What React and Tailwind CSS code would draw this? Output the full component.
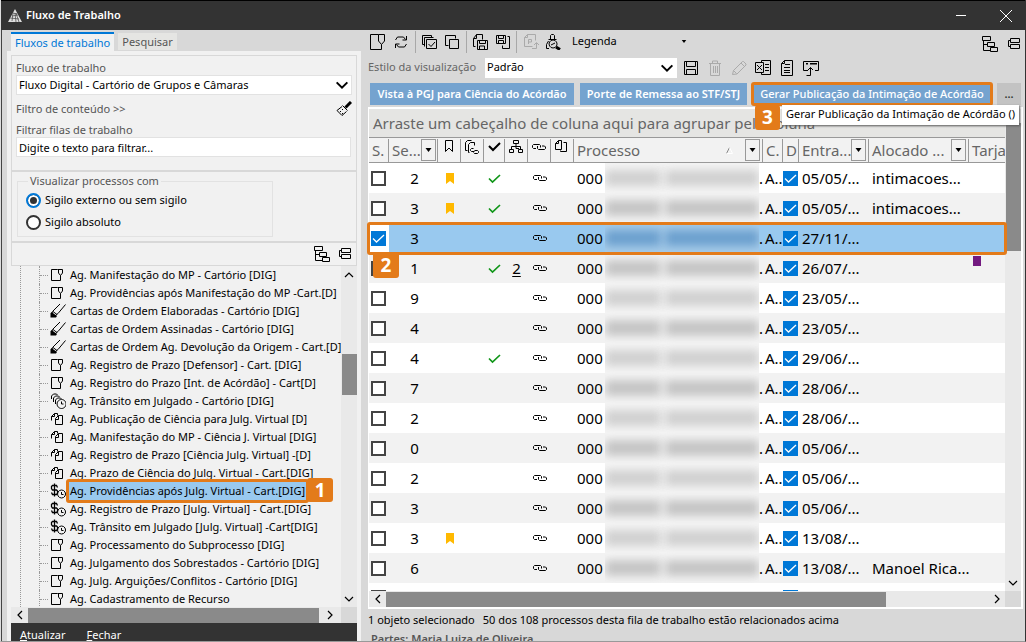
import React from "react";

const glyphs = {
  file: { paths: ["M7.500 2.500h-6v11h9v-5", "M7.500 2.500h5v3.500l-2 2.500-2-2.500v-3.500"] },
  fileLarge: { paths: ["M8.500 .5h-8v15h11v-5", "M8.500 .5h6v6.500l-3 3.500-3-3.500v-6.500"] },
  pen: { paths: ["M10 1L3 8l-1.500 3", "M15.500 1.500L8 10.500l-3 2.500", "M3 8.500l4 3"], fill: "M1.500 9l5.500 4-1 1.500H.5v-4z" },
  clocks: { paths: ["M1.500 6V3l2-2h3l1 1", "M3.500 9V5l2-2h3l1 1", "M5.500 11V7l2-2h3l1 1", "M11.500 6.500a4.500 4.500 0 1 0 .1 0z", "M11.500 8.500v2.500h2"] },
  copies: { paths: ["M1.500 9.500v-4l3-3h3v2M1.500 5.500h3v-3", "M5.500 13.500v-6l3-3h4v9zM5.500 8.500h3v-4"] },
  money: { paths: ["M7.500 4.500l-1-2h-4l-1 1v2l1 1.500h4l1 1v2l-1 1.500h-4l-1-2", "M4.500 .5v13"], thinBold: true, extra: ["M11.500 7a4 4 0 1 0 .1 0z", "M11.500 9v2.500h2"] },
  refresh: { paths: ["M2.500 6l2-3h6l2 2.500M13.500 2v4h-4", "M13.500 10l-2 3h-6l-2-2.500M2.500 14v-4h4"] },
  selectAll: { paths: ["M3.500 10.500h-2v-9h9v2", "M5.500 5.500h10v9h-10z", "M3.500 12.500v-9h9", "M7.500 10l2.500 2.500 4-4.500"] },
  stack: { paths: ["M4.500 11.500h-3v-10h10v3", "M5.500 5.500h9v9h-9z"] },
  copySave: { paths: ["M3.500 12.500h-2v-8l3-4h6v5M1.500 4.500h3v-4", "M5.500 6.500h10v9h-10zM7.500 6.500v3h6v-3M7.500 15v-3h5v3"] },
  saveCopy: { paths: ["M1.500 1.500h9v8h-9zM3.500 1.500v3h5v-3M3.500 9V6.500h5V9", "M12.500 2.500h2v12h-7v-3"] },
  pageUp: { paths: ["M9.500 12.500h-8v-9l3-3h8v6M4.500 .5v3h-3", "M5.500 10V5.500h3v2.500h-3", "M9 14.500h4.500V9M11 11l2.500-2.500L16 11"] },
  search: { paths: ["M5.500 5V1.500l1-1h2l1 1V5", "M3.500 5.500h8", "M4 14.500H1.500v-4l2-3.500", "M8 6a4 4 0 1 0 .1 0z", "M6 11l4-2"], thick: "M11 13l4 2.500" },
  tree: { paths: ["M.5 .5h8v4h-8z", "M5.500 6.500h7v4h-7z", "M8.500 11.500h7v4h-7z", "M1.500 5v9.500h7M1.500 8.500h4"] },
  collapse: { paths: ["M3.500 2.500h9v4h-9zM3.500 8.500h9v4h-9z", "M3.500 4.500h-2v6h2"] },
  save: { paths: ["M1.500 1.500h13v13h-13z", "M3.500 1.500v5h9v-5M3.500 14.500v-5h9v5"] },
  trash: { paths: ["M2 3.500h12M5.500 3v-2h5v2M3.500 4v11.500h9V4M6.500 6v7M8.500 6v7M10.500 6v7"] },
  pencil: { paths: ["M1.500 14.500l1-4 9-9h1l2.500 2.500v1l-9 9zM2.500 10.500l3 3M10 3l3 3"] },
  excel: { paths: ["M6.500 2V.5h9v14h-9V13", "M.5 2.500h8v10h-8zM2 5l5 5M7 5l-5 5", "M10 4.500h4M10 7.500h4M10 10.500h4"] },
  doc: { paths: ["M5.500 .5h8v15h-11v-12z", "M5.500 .5v3h-3M6 4.500h5M5 7.500h6M5 10.500h6M5 12.500h6"] },
  panel: { paths: ["M5 10.500H.5v-9h15v9H12", "M3.500 15.500h4v-8M5 10l2.500-2.500L10 10"], fill: "M3 3h2v1.500H3zM7 3h7v1.500H7z" },
  broom: { paths: ["M6.500 4.500l5 5", "M6 5.500l-5 4 5 5 4.500-4M4 10l1 1M6 8l1 1M6 12l1 1"], thick: "M15 1L9.500 6.500" },
  bookmark: { paths: ["M4.500 1.500h7v11l-3.500-3.500-3.500 3.500z"] },
  copyLink: { paths: ["M3.500 11.500h-2v-8l2-2h4M5.500 13.500h-1v-8l2-2h4v3", "M9.500 9.500h-2l-1 1v1l1 1h3M10.500 11.500h3l1 1v1l-1 1h-3l-1-1"] },
  org: { paths: ["M5.500 1.500h5v3h-5zM8 5v2.500M3.500 10V7.500h9V10M8 7.500v2h3", "M1.500 10.500h4v3h-4zM10.500 10.500h4v3h-4z"] },
  link: { paths: ["M5 9.500H2.500l-1-1v-2l1-1h6l1 1v2", "M6.500 7v2.500l1 1h6l1-1v-1.500l-1-1H11"] },
  pagePair: { paths: ["M7.500 10.500h-6v-6l3-3h3zM1.500 4.500h3v-3", "M9.500 3.500h3v9h-6v-1"] },
};

function Glyph({ name, className = "size-4" }) {
  const g = glyphs[name];
  return (
    <svg viewBox="0 0 16 16" className={`shrink-0 ${className}`} fill="none" stroke="currentColor" aria-hidden="true">
      {g.paths.map((d) => <path key={d} d={d} strokeWidth={g.thinBold ? 1.3 : 1} />)}
      {g.extra && g.extra.map((d) => <path key={d} d={d} />)}
      {g.fill && <path d={g.fill} fill="currentColor" stroke="none" />}
      {g.thick && <path d={g.thick} strokeWidth="3" />}
    </svg>
  );
}

function Chevron({ className = "size-3", dir = "down", width = 1.5 }) {
  const d = { down: "M2 4l4 4 4-4", up: "M2 8l4-4 4 4", left: "M8 2L4 6l4 4", right: "M4 2l4 4-4 4" }[dir];
  return (
    <svg viewBox="0 0 12 12" className={className} fill="none" stroke="currentColor" strokeWidth={width} aria-hidden="true">
      <path d={d} />
    </svg>
  );
}

function Check({ className, weight = 1.3 }) {
  return (
    <svg viewBox="0 0 15 15" className={className} fill="none" stroke="currentColor" aria-hidden="true">
      <path d="M2 7.500l3.500 3.500L13 4" strokeWidth={weight} />
    </svg>
  );
}

function Tick({ label, checked }) {
  return (
    <label className="grid size-[15px] place-items-center">
      <input type="checkbox" aria-label={label} defaultChecked={checked}
        className="peer col-start-1 row-start-1 size-[15px] appearance-none border-2 border-[#444] bg-white checked:border-[#0078d7] checked:bg-[#0078d7]" />
      <Check className="pointer-events-none col-start-1 row-start-1 hidden size-[15px] text-white peer-checked:block" />
    </label>
  );
}

function IconButton({ name, label, className = "" }) {
  return (
    <button type="button" aria-label={label} className={`flex size-4 items-center justify-center ${className}`}>
      <Glyph name={name} />
    </button>
  );
}

function Badge({ children, className }) {
  return (
    <span className={`absolute flex items-center justify-center rounded-[3px] bg-[#e37b1a] font-bold text-white ${className}`}>
      {children}
    </span>
  );
}

const queues = [
  ["file", "Ag. Manifestação do MP - Cartório [DIG]"],
  ["file", "Ag. Providências após Manifestação do MP -Cart.[D]"],
  ["pen", "Cartas de Ordem Elaboradas - Cartório [DIG]"],
  ["pen", "Cartas de Ordem Assinadas - Cartório [DIG]"],
  ["pen", "Cartas de Ordem Ag. Devolução da Origem - Cart.[D]"],
  ["file", "Ag. Registro de Prazo [Defensor] - Cart. [DIG]"],
  ["file", "Ag. Registro do Prazo [Int. de Acórdão] - Cart[D]"],
  ["clocks", "Ag. Trânsito em Julgado - Cartório [DIG]"],
  ["copies", "Ag. Publicação de Ciência para Julg. Virtual [D]"],
  ["copies", "Ag. Manifestação do MP - Ciência J. Virtual [DIG]"],
  ["copies", "Ag. Registro de Prazo [Ciência Julg. Virtual] -[D]"],
  ["copies", "Ag. Prazo de Ciência do Julg. Virtual - Cart.[DIG]"],
  ["money", "Ag. Providências após Julg. Virtual - Cart.[DIG]"],
  ["money", "Ag. Registro de Prazo [Julg. Virtual] - Cart.[DIG]"],
  ["money", "Ag. Trânsito em Julgado [Julg. Virtual] -Cart[DIG]"],
  ["file", "Ag. Processamento do Subprocesso [DIG]"],
  ["file", "Ag. Julgamento dos Sobrestados - Cartório [DIG]"],
  ["file", "Ag. Julg. Arguições/Conflitos - Cartório [DIG]"],
  ["file", "Ag. Cadastramento de Recurso"],
];
const activeQueue = 12;

const rows = [
  { n: 2, mark: true, ok: true, date: "05/05/...", who: "intimacoes..." },
  { n: 3, mark: true, ok: true, date: "05/05/...", who: "intimacoes..." },
  { n: 3, sel: true, date: "27/11/..." },
  { n: 1, ok: true, sub: 2, date: "26/07/...", tag: true },
  { n: 9, date: "23/05/..." },
  { n: 4, date: "23/05/..." },
  { n: 4, ok: true, date: "29/06/..." },
  { n: 7, date: "28/06/..." },
  { n: 2, date: "28/06/..." },
  { n: 0, date: "05/06/..." },
  { n: 2, date: "05/06/..." },
  { n: 3, date: "05/06/..." },
  { n: 3, mark: true, date: "13/08/..." },
  { n: 6, date: "13/08/...", who: "Manoel Rica..." },
];

function LeftPanel() {
  return (
    <aside className="flex w-[354px] shrink-0 flex-col">
      <div role="tablist" className="flex h-[21px] shrink-0 items-end gap-1 pl-1 pt-0.5 text-[11px]">
        <button role="tab" aria-selected="true" type="button" className="h-full border-t-2 border-[#0078d7] bg-[#f1f1f1] px-1 leading-4 text-[#0078d7]">
          Fluxos de trabalho
        </button>
        <button role="tab" aria-selected="false" type="button" className="mb-px h-[17px] bg-[#e5e5e3] px-1 leading-4 text-[#555]">Pesquisar</button>
      </div>
      <div className="flex min-h-0 flex-1 flex-col bg-[#f1f1f1] pl-1 pr-1 pt-1">
        <section className="h-[117px] shrink-0 border border-b-2 border-[#d8d8d8] px-1 pt-[5px] text-[11px] leading-[14px] text-[#555]">
          <label htmlFor="flow" className="block">Fluxo de trabalho</label>
          <div className="grid">
            <select id="flow" className="col-start-1 row-start-1 h-5 w-full appearance-none border border-[#e2e2e2] bg-white px-0.5 text-black">
              <option>Fluxo Digital - Cartório de Grupos e Câmaras</option>
            </select>
            <Chevron className="pointer-events-none col-start-1 row-start-1 mr-0.5 size-4 self-center justify-self-end text-black" />
          </div>
          <div className="flex items-center justify-between pt-1.5">
            <button type="button">Filtro de conteúdo &gt;&gt;</button>
            <IconButton name="broom" label="Limpar filtro" className="text-black" />
          </div>
          <label htmlFor="filter" className="block pt-1.5">Filtrar filas de trabalho</label>
          <input id="filter" placeholder="Digite o texto para filtrar..." className="block h-5 w-[335px] border border-[#e2e2e2] bg-white px-0.5 text-black placeholder:text-black placeholder:opacity-100" />
        </section>
        <section className="h-[71px] shrink-0 border-x border-b-2 border-[#d8d8d8] pl-[5px] pt-px text-[11px] leading-4">
          <fieldset className="h-[64px] w-[256px] border border-[#e2e2e2] px-2">
            <legend className="ml-0.5 px-0.5 text-[#555]">Visualizar processos com</legend>
            {["Sigilo externo ou sem sigilo", "Sigilo absoluto"].map((t, i) => (
              <label key={t} className="flex h-[22px] items-center gap-1">
                <input type="radio" name="secrecy" defaultChecked={i === 0}
                  className="size-[15px] appearance-none rounded-full border-2 border-[#333] bg-white checked:border-[#0078d7] checked:bg-[#333] checked:shadow-[inset_0_0_0_2px_white]" />
                {t}
              </label>
            ))}
          </fieldset>
        </section>
        <div className="flex h-[23px] shrink-0 items-center justify-end gap-2 border-x border-b border-[#d8d8d8] pr-0.5">
          <IconButton name="tree" label="Expandir filas" />
          <IconButton name="collapse" label="Recolher filas" />
        </div>
        <div className="flex min-h-0 flex-1">
          <ul className="ml-[9px] min-w-0 flex-1 overflow-hidden border-l border-dotted border-[#999] text-[11px] leading-[18px]">
            {queues.map(([icon, text], i) => (
              <li key={text} className="ml-[18px] flex h-[18px] items-center border-l border-dotted border-[#999]">
                <span className="w-2 shrink-0 border-t border-dotted border-[#999]" />
                <Glyph name={icon} className="ml-0.5 size-4" />
                <span className="relative ml-0.5 shrink-0">
                  <button type="button" className={i === activeQueue ? "h-[18px] whitespace-nowrap bg-[#99c9ef] px-0.5 leading-[18px]" : "whitespace-nowrap pl-0.5 leading-[18px]"}>
                    {text}
                  </button>
                  {i === activeQueue && (
                    <>
                      <span className="absolute -inset-x-0.5 -inset-y-[3px] rounded-[3px] border-[3px] border-[#e37b1a]" />
                      <Badge className="-top-1 left-full h-6 w-[26px] text-[19px]">1</Badge>
                    </>
                  )}
                </span>
              </li>
            ))}
          </ul>
          <div className="flex w-4 shrink-0 flex-col items-center bg-[#e9e9e9]">
            <Chevron dir="up" className="my-[3px] size-3" width={1.2} />
            <div className="mt-[70px] h-[41px] w-[15px] bg-[#8a8a8a]" />
            <Chevron className="mb-0.5 mt-auto size-3" width={1.2} />
          </div>
        </div>
        <div className="flex h-4 shrink-0 items-center bg-[#e9e9e9]">
          <span className="flex w-[17px] justify-center"><Chevron dir="left" className="size-3" width={1.2} /></span>
          <div className="h-[15px] flex-1 bg-[#8a8a8a]" />
          <span className="flex w-[22px] justify-center"><Chevron dir="right" className="size-3" width={1.2} /></span>
          <span className="h-full w-4 bg-[#d8d8d8]" />
        </div>
        <div className="flex h-[18px] shrink-0 gap-[21px] overflow-hidden bg-[#333] px-[9px] pt-1 text-[11px] leading-4 text-white">
          <button type="button" className="h-4"><u>A</u>tualizar</button>
          <button type="button" className="h-4"><u>F</u>echar</button>
        </div>
      </div>
    </aside>
  );
}

const Divider = () => <span className="h-[22px] w-px bg-[#a8a8a8]" />;

function Toolbars() {
  return (
    <>
      <div className="flex h-[23px] shrink-0 items-center justify-between">
        <div className="flex items-center text-black">
          <button type="button" aria-label="Novo" className="ml-0.5"><Glyph name="fileLarge" /></button>
          <IconButton name="refresh" label="Atualizar lista" className="ml-[7px] mr-1.5" />
          <Divider />
          <IconButton name="selectAll" label="Selecionar todos" className="ml-[5px] mr-[7px]" />
          <IconButton name="stack" label="Desmarcar todos" className="mr-1.5" />
          <Divider />
          <IconButton name="copySave" label="Salvar cópia" className="ml-[5px] mr-[7px]" />
          <IconButton name="saveCopy" label="Copiar e salvar" className="mr-[5px]" />
          <Divider />
          <IconButton name="pageUp" label="Publicar" className="mx-1.5 text-[#aaa]" />
          <IconButton name="search" label="Consultar processo" className="mr-[11px]" />
          <button type="button" className="flex w-[115px] items-center justify-between text-[11px]">
            Legenda
            <svg viewBox="0 0 6 4" className="h-[3px] w-1.5" aria-hidden="true"><path d="M0 0h6L3 4z" /></svg>
          </button>
        </div>
        <div className="flex items-center gap-[9px] pt-1">
          <IconButton name="tree" label="Expandir" />
          <IconButton name="collapse" label="Recolher" />
        </div>
      </div>
      <div className="flex h-7 shrink-0 items-center pt-px text-[#444]">
        <label htmlFor="style" className="w-[117px] whitespace-nowrap text-[11px] text-[#666]">Estilo da visualização</label>
        <div className="mr-1.5 grid w-[192px]">
          <select id="style" className="col-start-1 row-start-1 h-5 appearance-none bg-white px-0.5 text-[11px] text-black">
            <option>Padrão</option>
          </select>
          <Chevron className="pointer-events-none col-start-1 row-start-1 mr-0.5 size-4 self-center justify-self-end text-black" />
        </div>
        <div className="flex gap-2 text-black">
          <IconButton name="save" label="Salvar estilo" />
          <IconButton name="trash" label="Excluir estilo" className="text-[#aaa]" />
          <IconButton name="pencil" label="Editar estilo" className="text-[#aaa]" />
          <IconButton name="excel" label="Exportar para planilha" />
          <IconButton name="doc" label="Relatório" />
          <IconButton name="panel" label="Abrir painel" />
        </div>
      </div>
      <div className="flex h-[26px] shrink-0 items-center gap-1.5 pl-0.5 pr-0.5 text-[11px] font-semibold text-white">
        <button type="button" className="h-[22px] w-[204px] whitespace-nowrap bg-[#75a3cf]">Vista à PGJ para Ciência do Acórdão</button>
        <button type="button" className="h-[22px] w-[167px] whitespace-nowrap bg-[#75a3cf]">Porte de Remessa ao STF/STJ</button>
        <div className="relative w-[238px] font-medium">
          <button type="button" className="block h-[22px] w-full whitespace-nowrap bg-[#75a3cf]">Gerar Publicação da Intimação de Acórdão</button>
          <span className="absolute -inset-x-0.5 -inset-y-px rounded-[3px] border-[3px] border-[#e37b1a]" />
          <span role="tooltip" className="absolute left-[29px] top-[22px] z-20 h-5 whitespace-nowrap bg-white px-1 text-[11px] font-normal leading-[18px] text-black shadow-[1px_1px_2px_#555]">
            Gerar Publicação da Intimação de Acórdão ()
          </span>
          <Badge className="left-0.5 top-[22px] z-20 h-[25px] w-[25px] text-[19px]">3</Badge>
        </div>
        <button type="button" className="h-[22px] flex-1 bg-[#c3c3c3] text-[#333]">...</button>
      </div>
    </>
  );
}

function Head({ children, filter, className = "" }) {
  return (
    <th className="h-[26px] border-b border-t border-[#999] p-0 font-normal">
      <div className={`flex h-[23px] items-center overflow-hidden border-r border-[#999] ${className}`}>
        <span className="flex-1 whitespace-nowrap text-left">{children}</span>
        {filter && (
          <button type="button" aria-label="Filtrar coluna" className="mr-0.5 flex h-[22px] w-[15px] shrink-0 items-center justify-center border border-[#999]">
            <svg viewBox="0 0 6 4" className="h-1 w-[7px]" aria-hidden="true"><path d="M0 0h6L3 4z" /></svg>
          </button>
        )}
      </div>
    </th>
  );
}

function IconHead({ name }) {
  return (
    <th className="h-[26px] border-b border-t border-[#999] p-0 text-black">
      <div className="flex h-[23px] justify-center border-r border-[#999]">
        {name === "check"
          ? <svg viewBox="0 0 15 15" className="size-[15px]" fill="none" stroke="black" aria-hidden="true"><path d="M2 7l4 4L13 4" strokeWidth="2" /></svg>
          : <Glyph name={name} />}
      </div>
    </th>
  );
}

function Redaction({ selected, soft }) {
  const tone = selected ? "bg-[#6b9fce]" : soft ? "bg-[#d0d0d0]" : "bg-[#c4c4c4]";
  return (
    <span aria-hidden="true" className={`flex h-[30px] min-w-0 flex-1 items-center gap-1 overflow-hidden ${selected ? "bg-[#a8cdea]" : "bg-[#f5f5f5]"}`}>
      <span className={`h-4 w-14 shrink-0 blur-[5px] ${tone}`} />
      <span className={`h-4 flex-1 blur-[5px] ${tone}`} />
    </span>
  );
}

function Row({ r, i }) {
  const bg = r.sel ? "bg-[#99c9ef]" : i % 2 ? "bg-[#f2f2f2]" : "bg-white";
  return (
    <tr className={`h-[30px] ${bg}`}>
      <td className={`p-0 pl-0.5 ${r.sel ? "bg-white" : ""}`}><Tick label={`Selecionar linha ${i + 1}`} checked={r.sel} /></td>
      <td className="p-0 pl-0.5 text-center">{r.n}</td>
      <td className="p-0">{r.mark && <svg viewBox="0 0 8 11" className="mx-auto h-[11px] w-2" aria-hidden="true"><path d="M0 0h8v11L4 8l-4 3z" fill="#ffb900" /></svg>}</td>
      <td className="p-0" />
      <td className="p-0">{r.ok && <Check weight={1.7} className="mx-auto size-[15px] text-[#109618]" />}</td>
      <td className="p-0 text-center">{r.sub && <a href="#sub" className="underline underline-offset-2">{r.sub}</a>}</td>
      <td className="p-0"><Glyph name="link" className="mx-auto size-4" /></td>
      <td className="p-0" />
      <td className="p-0 pl-[3px]">
        <div className="flex h-[30px] items-center">
          <span className="w-7 shrink-0">000</span>
          <Redaction selected={r.sel} soft={i % 2 === 0} />
          <span>.</span>
        </div>
      </td>
      <td className="overflow-hidden whitespace-nowrap p-0 pl-0.5">A..</td>
      <td className="p-0"><Tick label={`Digital linha ${i + 1}`} checked /></td>
      <td className="whitespace-nowrap p-0 pl-[3px]">{r.date}</td>
      <td className="whitespace-nowrap p-0 pl-[3px]">{r.who}</td>
      <td className="p-0 pl-1 align-top">{r.tag && <div className="mt-[3px] h-2.5 w-2 bg-[#731a80]" />}</td>
    </tr>
  );
}

function PartialRow() {
  return (
    <tr className="h-[30px] bg-white align-top">
      <td className="p-0 pl-0.5 pt-[7px]"><Tick label="Selecionar linha 15" /></td>
      <td colSpan={9} className="p-0" />
      <td className="p-0 pt-[7px]"><Tick label="Digital linha 15" checked /></td>
      <td colSpan={3} className="p-0" />
    </tr>
  );
}

function ProcessGrid() {
  return (
    <div className="relative flex min-h-0 flex-1 flex-col border-2 border-l border-white bg-white">
      <div className="flex min-h-0 flex-1">
        <div className="min-w-0 flex-1 overflow-hidden">
          <div className="h-7 bg-[#e5e5e3] px-1 text-[15px] leading-7 text-[#666]">
            Arraste um cabeçalho de coluna aqui para agrupar pela coluna
          </div>
          <table className="w-full table-fixed border-separate border-spacing-0 text-[15px] leading-5">
            <colgroup>
              <col className="w-5" /><col className="w-[49px]" /><col className="w-[23px]" /><col className="w-[23px]" />
              <col className="w-[21px]" /><col className="w-[23px]" /><col className="w-[23px]" /><col className="w-[23px]" />
              <col /><col className="w-5" /><col className="w-4" /><col className="w-[70px]" /><col className="w-[100px]" /><col className="w-9" />
            </colgroup>
            <thead className="bg-[#f2f2f2] text-[#666]">
              <tr>
                <Head className="pl-[3px]">S.</Head>
                <Head filter className="pl-[3px]">Se...</Head>
                <IconHead name="bookmark" />
                <IconHead name="copyLink" />
                <IconHead name="check" />
                <IconHead name="org" />
                <IconHead name="link" />
                <IconHead name="pagePair" />
                <Head filter className="pl-[3px]">
                  <span className="flex items-center justify-between pr-3">
                    Processo
                    <svg viewBox="0 0 7 7" className="size-[7px]" fill="none" aria-hidden="true"><path d="M.5 6.500L3.500 .5" stroke="#888" /><path d="M3.500 .5l3 6h-6" stroke="white" /></svg>
                  </span>
                </Head>
                <Head className="pl-[3px]">C.</Head>
                <Head className="pl-[3px]">D</Head>
                <Head filter className="pl-[3px]">Entra...</Head>
                <Head filter className="pl-[3px]">Alocado ...</Head>
                <Head className="border-r-0 pl-[3px]">Tarja</Head>
              </tr>
            </thead>
            <tbody>
              {rows.map((r, i) => <Row key={i} r={r} i={i} />)}
              <PartialRow />
            </tbody>
          </table>
        </div>
        <div className="flex w-4 shrink-0 flex-col items-center bg-[#e9e9e9]">
          <div className="mt-3.5 h-[128px] w-[15px] bg-[#8a8a8a]" />
          <Chevron className="mb-0.5 mt-auto size-3" width={1.2} />
        </div>
      </div>
      <div className="flex h-4 shrink-0 items-center bg-[#e9e9e9]">
        <span className="flex w-[17px] justify-center"><Chevron dir="left" width={1.2} /></span>
        <div className="h-[15px] w-[500px] bg-[#8a8a8a]" />
        <span className="ml-auto mr-0.5"><Chevron dir="right" width={1.2} /></span>
        <span className="h-full w-4 bg-[#d8d8d8]" />
      </div>
      <span className="pointer-events-none absolute -left-0.5 right-3.5 top-[113px] h-[33px] rounded-[3px] border-[3px] border-[#e37b1a]" />
      <Badge className="left-1 top-[143px] h-[26px] w-[26px] text-[19px]">2</Badge>
    </div>
  );
}

export default function App() {
  return (
    <div className="flex h-screen flex-col overflow-hidden border-b border-l border-r border-b-[#999] border-l-[#ddd] border-r-[#333] bg-[#d8d8d8] font-['Noto_Sans','Open_Sans',sans-serif] text-black">
      <header className="flex h-[30px] shrink-0 items-center justify-between border-t border-black bg-[#333] pl-[7px] pr-[13px] text-white">
        <h1 className="flex items-center gap-1 text-[11px] font-semibold">
          <svg viewBox="0 0 14 14" className="size-3.5" aria-hidden="true">
            <path d="M7 0l7 13H0z" fill="#ddd" />
            <path d="M5 4l4 1M4 7l6-1M2 9l9 1M4 12l1-8M8 13l-1-9M11 13L8 4" stroke="#444" strokeWidth=".7" />
          </svg>
          Fluxo de Trabalho
        </h1>
        <div className="flex items-center gap-[34px]">
          <button type="button" aria-label="Minimizar" className="flex h-3 w-2.5 items-center"><span className="h-px w-full bg-white" /></button>
          <button type="button" aria-label="Fechar janela">
            <svg viewBox="0 0 12 12" className="size-3" stroke="white" aria-hidden="true"><path d="M0 0l12 12M12 0L0 12" /></svg>
          </button>
        </div>
      </header>
      <div className="flex min-h-0 flex-1 border-l border-[#444] pl-[5px]">
        <LeftPanel />
        <main className="flex min-w-0 flex-1 flex-col pl-[7px] pr-0.5">
          <Toolbars />
          <ProcessGrid />
          <p className="flex h-[22px] shrink-0 items-center gap-2 whitespace-nowrap text-[11px]">
            <span>1 objeto selecionado</span>
            <span>50 dos 108 processos desta fila de trabalho estão relacionados acima</span>
          </p>
          <p className="h-2.5 shrink-0 overflow-hidden pl-[3px] text-[11px] font-semibold leading-4 text-[#555]">Partes: Maria Luiza de Oliveira</p>
        </main>
      </div>
    </div>
  );
}
